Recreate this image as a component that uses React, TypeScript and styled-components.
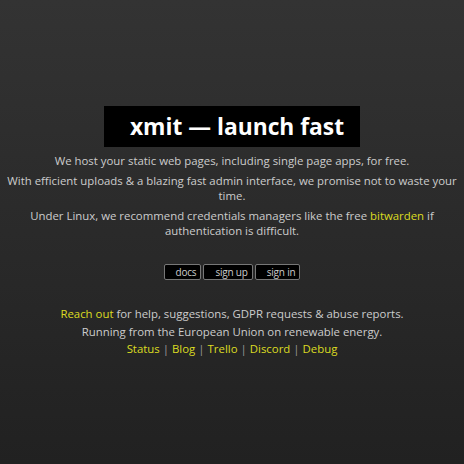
import React from 'react'
import { styled, createGlobalStyle } from 'styled-components'

const Global = createGlobalStyle`
    html, body {
        margin: 0;
        padding: 0;
        height: 100%;
    }
    body {
        background: linear-gradient(#333333, #212121);
        color: #cccccc;
        font-family: "Open Sans", "Liberation Sans", sans-serif;
        font-size: 11.4px;
        line-height: 15px;
    }
`

const Page = styled.main`
    height: 464px;
    display: flex;
    flex-direction: column;
    align-items: center;
    padding-top: 106px;
    box-sizing: border-box;
    text-align: center;
`

const Title = styled.h1`
    margin: 0 0 1px;
    background: #000;
    color: #fff;
    font-size: 22.8px;
    font-weight: 700;
    line-height: 41px;
    padding: 0 16px 0 26px;
`

const Para = styled.p`
    margin: 5px 4px 0;
`

const Link = styled.a`
    color: #dcdc22;
    text-decoration: none;
`

const Buttons = styled.nav`
    display: flex;
    gap: 2px;
    margin-top: 26px;
`

const Btn = styled.a`
    background: #000;
    color: #cccccc;
    border: 1px solid #777;
    border-radius: 2px;
    font-size: 10px;
    letter-spacing: -0.2px;
    line-height: 14px;
    padding: 0 4px 0 11px;
    text-decoration: none;
`

const Footer = styled.footer`
    margin-top: 26px;
    display: flex;
    flex-direction: column;
    gap: 2.5px;
`

const Sep = styled.span`
    color: #999;
    margin: 0 3px;
`

export default function App() {
    const links = ['Status', 'Blog', 'Trello', 'Discord', 'Debug']

    return (
        <>
            <Global />
            <Page>
                <Title>xmit — launch fast</Title>
                <Para>We host your static web pages, including single page apps, for free.</Para>
                <Para>With efficient uploads &amp; a blazing fast admin interface, we promise not to waste your time.</Para>
                <Para>
                    Under Linux, we recommend credentials managers like the free <Link href="#">bitwarden</Link> if authentication is difficult.
                </Para>

                <Buttons>
                    <Btn href="#">docs</Btn>
                    <Btn href="#">sign up</Btn>
                    <Btn href="#">sign in</Btn>
                </Buttons>

                <Footer>
                    <div><Link href="#">Reach out</Link> for help, suggestions, GDPR requests &amp; abuse reports.</div>
                    <div>Running from the European Union on renewable energy.</div>
                    <div>
                        {links.map((l, i) => (
                            <React.Fragment key={l}>
                                {i > 0 && <Sep>|</Sep>}
                                <Link href="#">{l}</Link>
                            </React.Fragment>
                        ))}
                    </div>
                </Footer>
            </Page>
        </>
    )
}
